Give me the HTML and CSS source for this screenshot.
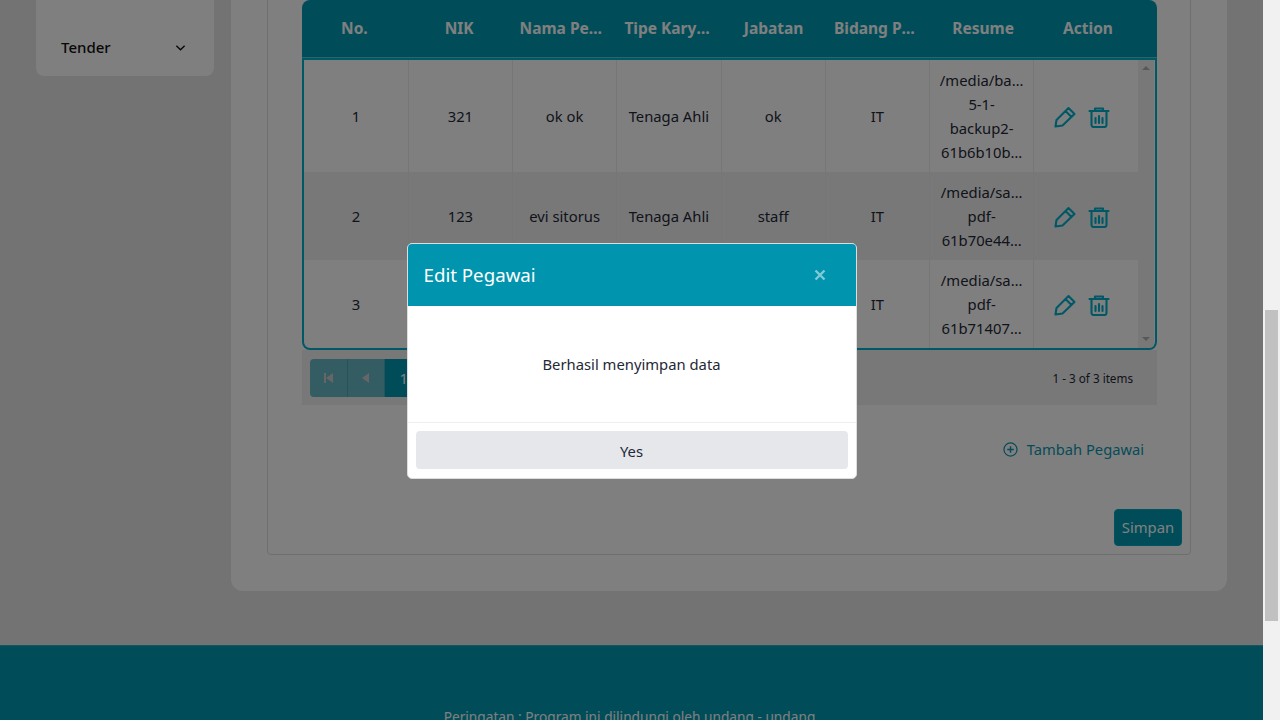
FILE: index.html
```html
<!DOCTYPE html>
<html lang="en">
<head>
    <meta charset="UTF-8">
    <title>Edit Pegawai</title>
    <link rel="stylesheet" href="styles.css">
</head>
<body>
    <div class="viewport">
        <div class="layout">
            <!--sidebar menu, scrolled up so only the last item shows-->
            <aside class="sidebar">
                <div class="menu-item">
                    <span>Tender</span>
                    <svg class="chevron" width="11" height="11" viewBox="0 0 12 12"><path d="M1.500 4l4.500 4.500L10.500 4" fill="none" stroke="currentColor" stroke-width="1.500"/></svg>
                </div>
            </aside>

            <main class="card">
                <div class="form-box">
                    <div class="grid-wrap">
                        <div class="grid-head">
                            <div class="head-cell">No.</div>
                            <div class="head-cell">NIK</div>
                            <div class="head-cell">Nama Pegawai</div>
                            <div class="head-cell">Tipe Karyawan</div>
                            <div class="head-cell">Jabatan</div>
                            <div class="head-cell">Bidang Pekerjaan</div>
                            <div class="head-cell">Resume</div>
                            <div class="head-cell">Action</div>
                        </div>

                        <div class="grid-body">
                            <table class="grid-table">
                                <tr>
                                    <td>1</td>
                                    <td>321</td>
                                    <td>ok ok</td>
                                    <td>Tenaga Ahli</td>
                                    <td>ok</td>
                                    <td>IT</td>
                                    <td>/media/ba…<br>5-1-<br>backup2-<br>61b6b10b…</td>
                                    <td>
                                        <div class="actions">
                                            <svg class="icon" viewBox="0 0 22 22"><path d="M1.500 20.500l1-6.500L14.500 2l6 6L8.500 19.500z M11.500 5l6 6"/></svg>
                                            <svg class="icon" viewBox="0 0 22 22"><path d="M1.500 5h19 M7 5V2.500h8V5 M3.500 5v14a2 2 0 0 0 2 2h11a2 2 0 0 0 2-2V5 M7.500 12v5 M11 10v7 M14.500 12v5"/></svg>
                                        </div>
                                    </td>
                                </tr>
                                <tr class="alt">
                                    <td>2</td>
                                    <td>123</td>
                                    <td>evi sitorus</td>
                                    <td>Tenaga Ahli</td>
                                    <td>staff</td>
                                    <td>IT</td>
                                    <td>/media/sa…<br>pdf-<br>61b70e44…</td>
                                    <td>
                                        <div class="actions">
                                            <svg class="icon" viewBox="0 0 22 22"><path d="M1.500 20.500l1-6.500L14.500 2l6 6L8.500 19.500z M11.500 5l6 6"/></svg>
                                            <svg class="icon" viewBox="0 0 22 22"><path d="M1.500 5h19 M7 5V2.500h8V5 M3.500 5v14a2 2 0 0 0 2 2h11a2 2 0 0 0 2-2V5 M7.500 12v5 M11 10v7 M14.500 12v5"/></svg>
                                        </div>
                                    </td>
                                </tr>
                                <tr>
                                    <td>3</td>
                                    <td>456</td>
                                    <td>budi</td>
                                    <td>Tenaga Ahli</td>
                                    <td>staff</td>
                                    <td>IT</td>
                                    <td>/media/sa…<br>pdf-<br>61b71407…</td>
                                    <td>
                                        <div class="actions">
                                            <svg class="icon" viewBox="0 0 22 22"><path d="M1.500 20.500l1-6.500L14.500 2l6 6L8.500 19.500z M11.500 5l6 6"/></svg>
                                            <svg class="icon" viewBox="0 0 22 22"><path d="M1.500 5h19 M7 5V2.500h8V5 M3.500 5v14a2 2 0 0 0 2 2h11a2 2 0 0 0 2-2V5 M7.500 12v5 M11 10v7 M14.500 12v5"/></svg>
                                        </div>
                                    </td>
                                </tr>
                            </table>
                            <div class="grid-scroll">
                                <span class="arrow-up"></span>
                                <span class="arrow-down"></span>
                            </div>
                        </div>

                        <div class="pager">
                            <div class="pager-btns">
                                <a class="page-btn off"><span class="first-mark"></span><span class="arrow-left"></span></a>
                                <a class="page-btn off"><span class="arrow-left"></span></a>
                                <a class="page-btn">1</a>
                            </div>
                            <div class="pager-info">1 - 3 of 3 items</div>
                        </div>
                    </div>

                    <div class="add-row">
                        <a class="add-link">
                            <svg width="15" height="15" viewBox="0 0 16 16"><circle cx="8" cy="8" r="7" fill="none" stroke="currentColor" stroke-width="1.300"/><path d="M8 4.500v7M4.500 8h7" stroke="currentColor" stroke-width="1.600"/></svg>
                            Tambah Pegawai
                        </a>
                    </div>

                    <div class="save-row">
                        <button class="save-btn">Simpan</button>
                    </div>
                </div>
            </main>
        </div>

        <footer class="footer">Peringatan : Program ini dilindungi oleh undang - undang</footer>

        <!--dialog over the dimmed page-->
        <div class="overlay">
            <div class="modal">
                <div class="modal-head">
                    <span class="modal-title">Edit Pegawai</span>
                    <svg class="modal-close" width="12" height="12" viewBox="0 0 12 12"><path d="M1.500 1.500l9 9M10.500 1.500l-9 9" stroke="#fff" stroke-width="2.400"/></svg>
                </div>
                <div class="modal-body">Berhasil menyimpan data</div>
                <div class="modal-foot">
                    <button class="yes-btn">Yes</button>
                </div>
            </div>
        </div>
    </div>

    <div class="scrollbar"><div class="thumb"></div></div>
</body>
</html>
```

FILE: styles.css
```css
*{
    margin: 0;
    padding: 0;
    box-sizing: border-box;
}
html, body{
    height: 720px;
    overflow: hidden;
}
body{
    display: flex;
    font-family: "Noto Sans", "Liberation Sans", sans-serif;
    font-size: 14.8px;
    line-height: 24px;
    color: #1f2937;
    background-color: #e6e6e6;
}
.viewport{
    position: relative;
    width: 1263px;
    height: 720px;
    overflow: hidden;
}

/*page scrolled down by 60px*/
.layout{
    display: flex;
    align-items: flex-start;
    gap: 18px;
    margin-top: -60px;
    padding-left: 36px;
}
.sidebar{
    width: 178px;
    height: 136px;
    padding: 95px 28px 0 25px;
    background-color: #fff;
    border-radius: 8px;
}
.menu-item{
    display: flex;
    align-items: center;
    justify-content: space-between;
    font-size: 15px;
    font-weight: 500;
    color: #111;
}
.card{
    width: 996px;
    height: 651px;
    margin-left: -1px;
    padding: 20px 36px 36px;
    background-color: #fff;
    border-radius: 12px;
}
.form-box{
    height: 595px;
    padding: 39px 8px 8px;
    border: 1px solid #ddd;
    border-radius: 4px;
}

/*grid*/
.grid-wrap{
    margin: 0 25px 0 26px;
}
.grid-head{
    display: flex;
    height: 58px;
    padding-right: 16.600px;
    background-color: #009ab3;
    border-radius: 8px 8px 0 0;
    border-bottom: 1px solid #5cc;
}
.head-cell{
    flex: 1 1 0;
    min-width: 0;
    padding: 0 8px;
    line-height: 57px;
    text-align: center;
    font-size: 15.500px;
    font-weight: 700;
    color: #fff;
    white-space: nowrap;
    overflow: hidden;
    text-overflow: ellipsis;
}
.grid-body{
    display: flex;
    height: 292px;
    border: 2px solid #00b0cc;
    border-radius: 0 0 8px 8px;
    overflow: hidden;
}
.grid-table{
    width: 834px;
    height: 288px;
    table-layout: fixed;
    border-collapse: collapse;
}
.grid-table td{
    padding: 8px;
    text-align: center;
    border-left: 1px solid #ececec;
}
.grid-table td:first-child{
    border-left: 0;
}
.alt{
    background-color: #f0f0f0;
}
.actions{
    display: flex;
    justify-content: center;
    gap: 11.500px;
    margin-top: 2px;
    padding-right: 8px;
}
.icon{
    flex: none;
    width: 22px;
    height: 22px;
    fill: none;
    stroke: #00b0cc;
    stroke-width: 2.100;
    stroke-linejoin: round;
    stroke-linecap: round;
}
.grid-scroll{
    width: 16px;
    display: flex;
    flex-direction: column;
    justify-content: space-between;
    align-items: center;
    padding: 6px 0 7px;
    background-color: #f1f1f1;
}
.arrow-up, .arrow-down{
    width: 0;
    height: 0;
    border-left: 4px solid transparent;
    border-right: 4px solid transparent;
}
.arrow-up{
    border-bottom: 4px solid #b0b0b0;
}
.arrow-down{
    border-top: 4px solid #b0b0b0;
}

/*pager*/
.pager{
    display: flex;
    align-items: center;
    justify-content: space-between;
    height: 55px;
    padding: 0 24px 0 8px;
    background-color: #f0f0f0;
}
.pager-btns{
    display: flex;
}
.page-btn{
    display: flex;
    align-items: center;
    justify-content: center;
    width: 37.500px;
    height: 38px;
    background-color: #009ab3;
    color: #fff;
}
.page-btn:first-child{
    border-radius: 4px 0 0 4px;
}
.page-btn.off{
    background-color: #66b8c6;
    border-right: 1px solid #4fa6b4;
}
.arrow-left{
    width: 0;
    height: 0;
    border-top: 5px solid transparent;
    border-bottom: 5px solid transparent;
    border-right: 7px solid #ccc;
}
.first-mark{
    width: 2px;
    height: 10px;
    background-color: #ccc;
}
.pager-info{
    font-size: 11.700px;
}

.add-row{
    display: flex;
    justify-content: flex-end;
    margin-top: 28px;
    padding-right: 38px;
}
.add-link{
    display: flex;
    align-items: center;
    gap: 9px;
    height: 32px;
    font-size: 14.700px;
    color: #0a98b0;
}
.save-row{
    display: flex;
    justify-content: flex-end;
    margin-top: 44px;
}
.save-btn{
    width: 68px;
    height: 37px;
    padding-bottom: 2px;
    font: inherit;
    color: #fff;
    background-color: #009ab3;
    border: 1px solid #00a6c0;
    border-radius: 4px;
}

.footer{
    height: 100px;
    margin-top: 54px;
    padding: 59px 4px 0 0;
    text-align: center;
    font-size: 13.700px;
    color: #fff;
    background-color: #009ab3;
    border-top: 1px solid #33aabb;
}

/*modal*/
.overlay{
    position: absolute;
    inset: 0;
    display: flex;
    align-items: center;
    justify-content: center;
    padding-top: 1px;
    background-color: rgba(0, 0, 0, 0.5);
}
.modal{
    width: 450px;
    height: 236px;
    background-color: #fff;
    border: 1px solid #ddd;
    border-radius: 5px;
    overflow: hidden;
}
.modal-head{
    display: flex;
    align-items: center;
    justify-content: space-between;
    height: 62px;
    padding: 0 30px 0 16px;
    background-color: #0094ae;
    color: #fff;
}
.modal-title{
    font-size: 18.700px;
}
.modal-close{
    opacity: 0.5;
}
.modal-body{
    height: 117px;
    line-height: 116px;
    text-align: center;
    border-bottom: 1px solid #eee;
}
.modal-foot{
    padding: 8px;
}
.yes-btn{
    display: block;
    width: 100%;
    height: 38px;
    padding-top: 2px;
    font: inherit;
    color: #1f2937;
    background-color: #e5e7eb;
    border: 0;
    border-radius: 4px;
}

/*browser scrollbar*/
.scrollbar{
    width: 17px;
    height: 720px;
    padding: 310px 2px 0;
    background-color: #f1f1f1;
}
.thumb{
    height: 311px;
    background-color: #c1c1c1;
}
```
